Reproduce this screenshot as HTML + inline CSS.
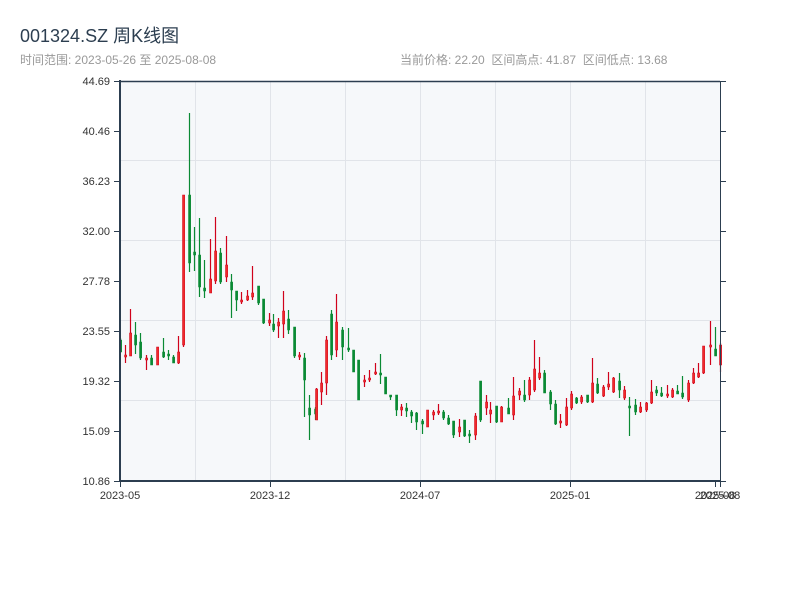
<!DOCTYPE html>
<html><head><meta charset="utf-8"><style>
body{margin:0;width:800px;height:600px;background:#fff;font-family:"Liberation Sans","Noto Sans CJK SC",sans-serif;overflow:hidden;position:relative}
.t{position:absolute;left:20px;top:22px;font-size:18px;color:#2c3e50}
.s{position:absolute;left:20px;top:51px;font-size:12px;color:#999}
.r{position:absolute;left:400px;top:51px;font-size:12px;color:#999;white-space:pre}
svg{position:absolute;left:0;top:0}
</style></head><body>
<div class="t">001324.SZ 周K线图</div>
<div class="s">时间范围: 2023-05-26 至 2025-08-08</div>
<div class="r">当前价格: 22.20  区间高点: 41.87  区间低点: 13.68</div>
<svg width="800" height="600" id="s" font-family="Liberation Sans, sans-serif" font-size="11" fill="#333">
<rect x="121" y="81" width="599" height="400" fill="#f6f8fa"/>
<g stroke="#e1e4e9" stroke-width="1">
<line x1="195.5" y1="81" x2="195.5" y2="481"/><line x1="270.5" y1="81" x2="270.5" y2="481"/><line x1="345.5" y1="81" x2="345.5" y2="481"/><line x1="420.5" y1="81" x2="420.5" y2="481"/><line x1="495.5" y1="81" x2="495.5" y2="481"/><line x1="570.5" y1="81" x2="570.5" y2="481"/><line x1="645.5" y1="81" x2="645.5" y2="481"/>
<line x1="121" y1="160.5" x2="720" y2="160.5"/><line x1="121" y1="240.5" x2="720" y2="240.5"/><line x1="121" y1="320.5" x2="720" y2="320.5"/><line x1="121" y1="400.5" x2="720" y2="400.5"/>
</g>
<g id="c"></g>
<g stroke="#2c3e50">
<line x1="120" y1="81.5" x2="720" y2="81.5" stroke-width="1.5"/>
<line x1="120" y1="80" x2="120" y2="482" stroke-width="2"/>
<line x1="120" y1="481" x2="721" y2="481" stroke-width="2"/>
<line x1="720.5" y1="81" x2="720.5" y2="481" stroke-width="1"/>
</g>
<g id="ax" stroke="#2c3e50" stroke-width="1"></g>
<g id="lb" text-anchor="end" fill="#333"></g>
<g text-anchor="middle" fill="#333">
<text x="120" y="499">2023-05</text><text x="270" y="499">2023-12</text><text x="420" y="499">2024-07</text><text x="570" y="499">2025-01</text><text x="715" y="499">2025-08</text><text x="720" y="499">2025-08</text>
</g>
</svg>
<script>
var d=[[120,338,352,340,352,0],[125,345,363,355,357,1],[130,309,356,333,356,1],[135,322,354,335,345,0],[140,333,360,342,358,0],[146,355,370,358,360,1],[151,355,365,358,365,0],[157,347,365,347,365,1],[163,338,358,352,357,0],[168,350,360,354,356,0],[173,355,363,357,363,0],[178,336,364,352,363,1],[183,195,347,195,345,1],
[189,113,272,195,263,0],[194,227,271,252,255,0],[199,218,297,255,287,0],[204,260,298,288,291,0],[210,239,293,279,293,1],[215,217,284,251,281,1],[220,248,284,253,282,0],[226,236,282,265,277,1],[231,274,318,282,290,0],[236,291,311,291,300,0],[241,292,304,300,302,1],[247,290,301,296,300,1],[252,266,300,293,297,1],[258,286,305,286,303,0],[263,299,324,299,323,0],[269,313,326,320,323,1],[273,314,332,324,330,0],[278,318,338,322,326,1],[283,291,338,311,324,1],[288,310,334,319,330,0],[294,327,358,327,356,0],[299,352,360,355,357,1],[304,353,417,358,380,0],[309,395,440,408,415,0],[315,407,420,409,414,0],[316,388,420,389,420,1],[321,372,405,383,392,1],[326,336,395,340,383,1],[331,310,360,314,355,0],[336,294,357,322,350,1],[342,327,360,330,347,0],[348,328,352,348,350,0],[353,350,372,350,372,0],[358,360,400,360,400,0],[364,375,387,380,381,1],[369,370,382,378,380,1],[375,363,375,372,374,1],[380,354,384,373,375,0],[385,377,394,377,394,0],[390,395,400,395,397,0],[396,395,416,395,410,0],[401,404,416,407,410,1],[406,403,417,408,411,0],[411,410,423,412,416,0],[416,412,430,413,422,0],[422,419,434,421,424,0],[427,410,427,410,427,1],[433,410,420,412,415,1],[438,404,415,411,412,1],[443,410,420,412,418,0],[448,415,425,418,424,0],[453,421,438,421,435,0],[459,419,437,427,432,1],[464,420,437,420,436,0],[469,430,443,434,436,0],[475,413,440,416,435,1],[480,381,422,381,420,0],[486,395,415,402,408,1],[490,402,423,410,414,1],[496,406,423,406,422,0],[501,406,422,407,422,1],[508,398,414,408,414,0],[513,377,420,396,415,1],[519,388,400,391,395,1],[524,380,402,395,400,0],[529,377,400,380,395,1],[534,340,392,369,390,1],[539,357,380,373,378,1],[544,370,393,373,393,0],[550,390,410,392,404,0],[555,400,425,404,424,0],[560,414,428,421,423,1],[566,398,426,407,425,1],[571,391,410,394,408,1],[576,397,404,398,403,0],[581,395,404,397,402,1],[587,395,403,395,402,0],[592,358,403,383,402,1],[597,378,394,384,393,0],[603,385,397,387,396,1],[608,372,390,384,387,1],[613,377,393,378,392,1],[619,373,398,381,390,0],[624,386,400,390,398,1],[629,397,436,406,408,0],[635,399,415,405,412,0],[640,402,413,407,412,1],[646,402,412,403,410,1],[651,380,404,392,403,1],[656,386,396,390,393,0],[661,387,397,393,396,0],[667,385,398,394,396,1],[672,388,398,390,397,1],[677,385,394,391,394,0],[682,376,399,393,397,0],[688,380,402,383,400,1],[693,368,384,373,383,1],[698,363,378,373,377,1],[703,346,374,346,373,1],[710,321,365,345,347,1],[715,327,356,349,356,0],[720,343,372,345,365,1]];
var h='';
d.forEach(function(c){var col=c[5]?'#d0021b':'#0a8a34',f=c[5]?'#ef2b2b':'#0a8a34';
h+='<line x1="'+(c[0]+.5)+'" y1="'+c[1]+'" x2="'+(c[0]+.5)+'" y2="'+c[2]+'" stroke="'+col+'" stroke-width="1.2"/>';
var t=Math.min(c[3],c[4]),b=Math.max(c[3],c[4]);if(b-t<2)b=t+2;
h+='<rect x="'+(c[0]-0.5)+'" y="'+t+'" width="2.2" height="'+(b-t)+'" fill="'+f+'" stroke="'+col+'" stroke-width="0.5"/>';});
document.getElementById('c').innerHTML=h;
var labs=['44.69','40.46','36.23','32.00','27.78','23.55','19.32','15.09','10.86'],a='',l='';
labs.forEach(function(s,i){var y=81+i*50;a+='<line x1="114" y1="'+(y+.5)+'" x2="120" y2="'+(y+.5)+'"/><line x1="720" y1="'+(y+.5)+'" x2="726" y2="'+(y+.5)+'"/>';l+='<text x="110" y="'+(y+4)+'">'+s+'</text>';});
[120,270,420,570,715,720].forEach(function(x){a+='<line x1="'+(x+.5)+'" y1="481" x2="'+(x+.5)+'" y2="487"/>';});
document.getElementById('ax').innerHTML=a;document.getElementById('lb').innerHTML=l;
</script>
</body></html>
